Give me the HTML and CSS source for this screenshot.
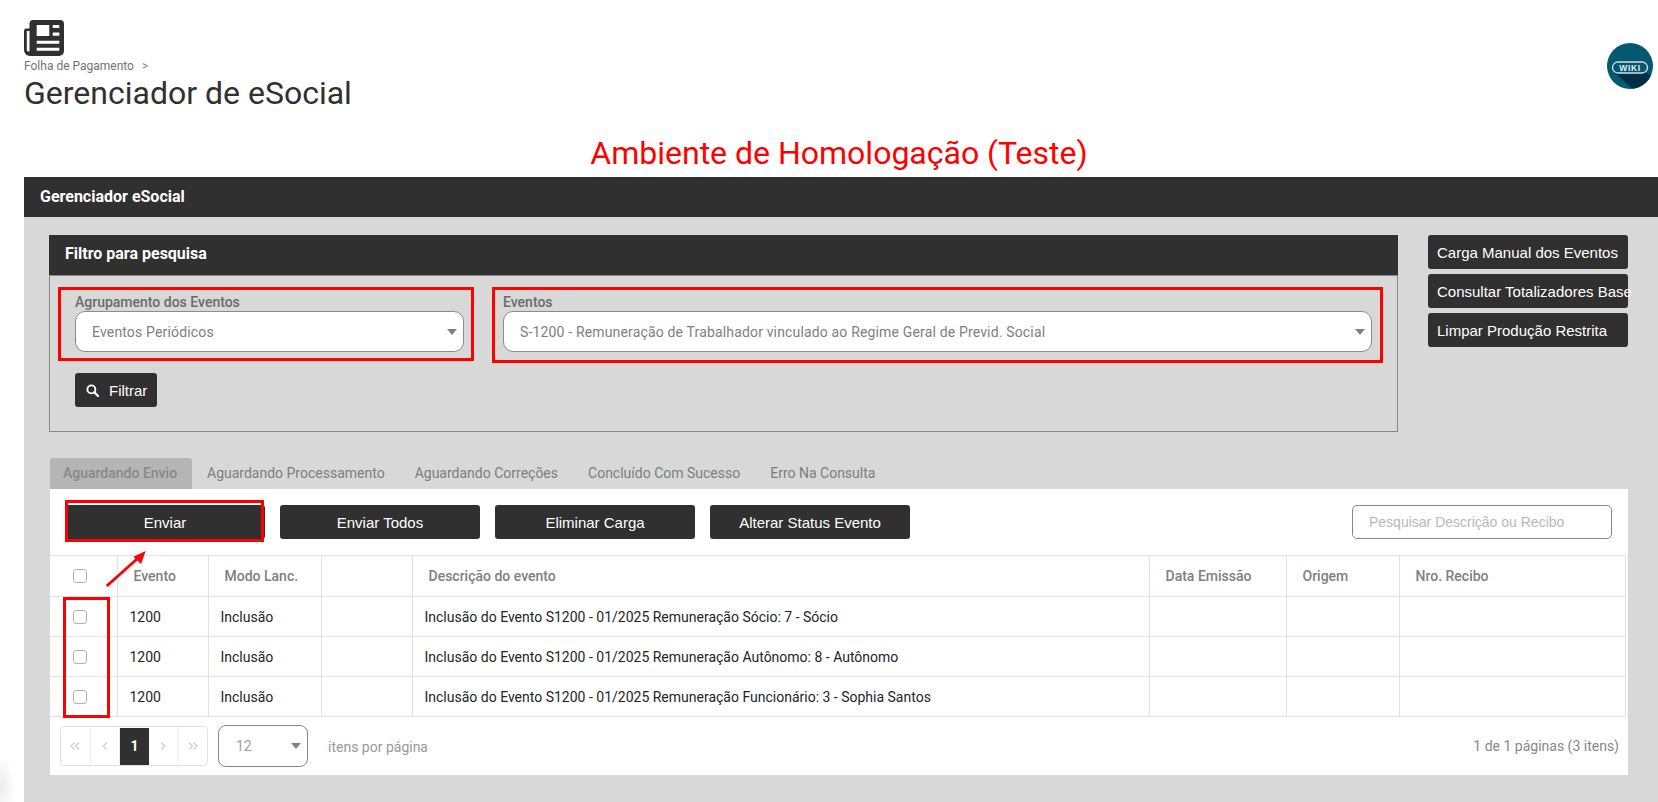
FILE: index.html
```html
<!DOCTYPE html>
<html lang="pt-BR">
<head>
<meta charset="utf-8">
<title>Gerenciador de eSocial</title>
<link rel="stylesheet" href="styles.css">
</head>
<body>
<header class="page-head">
  <div class="head-left">
    <svg class="news-icon" viewBox="0 0 40 36" aria-hidden="true">
      <path fill="#303030" fill-rule="evenodd" d="M9 0H36a4 4 0 0 1 4 4V31a5 5 0 0 1-5 5H6a6 6 0 0 1-6-6V11a2.500 2.500 0 0 1 2.500-2.500H5.500V3.500A3.500 3.500 0 0 1 9 0ZM2.800 11V30a1.700 1.700 0 0 0 2.700 1.200V11ZM12.700 5V16H25.300V5ZM28.700 5V8H35.300V5ZM28.700 12.500V15.700H35.300V12.500ZM12.700 20.700V23.700H35.300V20.700ZM12.700 27.700V30.700H35.300V27.700Z"/>
    </svg>
    <div class="crumb">Folha de Pagamento <span class="crumb-sep">&gt;</span></div>
    <h1 class="title">Gerenciador de eSocial</h1>
  </div>
  <svg class="wiki" viewBox="0 0 46 46" aria-hidden="true">
    <defs><clipPath id="wc"><circle cx="23" cy="23" r="23"/></clipPath></defs>
    <circle cx="23" cy="23" r="23" fill="#04586f"/>
    <path clip-path="url(#wc)" fill="#022f43" d="M8 30H40L46 34V46H26Z"/>
    <rect x="5.500" y="19" width="35" height="11" rx="5.500" fill="#04586f" stroke="#d5dfe3" stroke-width="1.300"/>
    <text x="23" y="27.800" text-anchor="middle" class="wiki-text">WIKI</text>
  </svg>
</header>
<div class="env">Ambiente de Homologação (Teste)</div>
<main class="main">
  <div class="main-bar">Gerenciador eSocial</div>
  <div class="main-body">
    <div class="top-row">
      <section class="filter">
        <div class="filter-head">Filtro para pesquisa</div>
        <div class="filter-body">
          <div class="fields">
            <div class="field field-a">
              <label class="lbl">Agrupamento dos Eventos</label>
              <div class="select">Eventos Periódicos<span class="caret"></span></div>
            </div>
            <div class="field field-b">
              <label class="lbl">Eventos</label>
              <div class="select">S-1200 - Remuneração de Trabalhador vinculado ao Regime Geral de Previd. Social<span class="caret"></span></div>
            </div>
          </div>
          <button class="btn btn-filter">
            <svg class="search" viewBox="0 0 14 14" aria-hidden="true"><circle cx="5.800" cy="5.800" r="4.300" fill="none" stroke="#fff" stroke-width="2"/><path d="M9 9l4 4" stroke="#fff" stroke-width="2.400" stroke-linecap="round"/></svg>
            Filtrar
          </button>
        </div>
      </section>
      <div class="side">
        <button class="btn side-btn">Carga Manual dos Eventos</button>
        <button class="btn side-btn">Consultar Totalizadores Base</button>
        <button class="btn side-btn">Limpar Produção Restrita</button>
      </div>
    </div>
    <nav class="tabs">
      <span class="tab tab-on">Aguardando Envio</span>
      <span class="tab">Aguardando Processamento</span>
      <span class="tab">Aguardando Correções</span>
      <span class="tab">Concluído Com Sucesso</span>
      <span class="tab">Erro Na Consulta</span>
    </nav>
    <section class="panel">
      <div class="toolbar">
        <button class="btn act">Enviar</button>
        <button class="btn act">Enviar Todos</button>
        <button class="btn act">Eliminar Carga</button>
        <button class="btn act">Alterar Status Evento</button>
        <div class="search-box">Pesquisar Descrição ou Recibo</div>
      </div>
      <table class="grid">
        <colgroup>
          <col class="c1"><col class="c2"><col class="c3"><col class="c4"><col class="c5"><col class="c6"><col class="c7"><col>
        </colgroup>
        <thead>
          <tr>
            <th class="chk"><span class="box"></span></th>
            <th>Evento</th><th>Modo Lanc.</th><th></th><th>Descrição do evento</th><th>Data Emissão</th><th>Origem</th><th>Nro. Recibo</th>
          </tr>
        </thead>
        <tbody>
          <tr>
            <td class="chk"><span class="box"></span></td>
            <td>1200</td><td>Inclusão</td><td></td><td>Inclusão do Evento S1200 - 01/2025 Remuneração Sócio: 7 - Sócio</td><td></td><td></td><td></td>
          </tr>
          <tr>
            <td class="chk"><span class="box"></span></td>
            <td>1200</td><td>Inclusão</td><td></td><td>Inclusão do Evento S1200 - 01/2025 Remuneração Autônomo: 8 - Autônomo</td><td></td><td></td><td></td>
          </tr>
          <tr>
            <td class="chk"><span class="box"></span></td>
            <td>1200</td><td>Inclusão</td><td></td><td>Inclusão do Evento S1200 - 01/2025 Remuneração Funcionário: 3 - Sophia Santos</td><td></td><td></td><td></td>
          </tr>
        </tbody>
      </table>
      <div class="pager">
        <div class="pages">
          <span class="pg"><svg class="chev" viewBox="0 0 10 8" aria-hidden="true"><path d="M4.500 .5L1 4l3.500 3.500M9 .5L5.500 4 9 7.500"/></svg></span>
          <span class="pg"><svg class="chev" viewBox="0 0 10 8" aria-hidden="true"><path d="M6.800 .5L3.300 4l3.500 3.500"/></svg></span>
          <span class="pg pg-on">1</span>
          <span class="pg"><svg class="chev" viewBox="0 0 10 8" aria-hidden="true"><path d="M3.300 .5L6.800 4 3.300 7.500"/></svg></span>
          <span class="pg"><svg class="chev" viewBox="0 0 10 8" aria-hidden="true"><path d="M1 .5L4.500 4 1 7.500M5.500 .5L9 4 5.500 7.500"/></svg></span>
        </div>
        <div class="size">12<span class="caret"></span></div>
        <span class="per">itens por página</span>
        <span class="count">1 de 1 páginas (3 itens)</span>
      </div>
    </section>
  </div>
</main>
<div class="mark mark-a"></div>
<div class="mark mark-b"></div>
<div class="mark mark-c"></div>
<div class="mark mark-d"></div>
<svg class="arrow" viewBox="0 0 42 36" aria-hidden="true"><path d="M1.700 35L32 8" stroke="#f00" stroke-width="2.800"/><path d="M40.700 0L36 13L28.300 5.700Z" fill="#f00"/></svg>
<div class="glow"></div>
</body>
</html>
```
FILE: styles.css
```css
* { box-sizing: border-box; }
html, body { margin: 0; height: 100%; }
body {
  position: relative;
  overflow: hidden;
  background: #fff;
  font-family: Roboto, "Liberation Sans", sans-serif;
  color: #212529;
  padding-left: 24px;
}
.page-head {
  height: 128px;
  padding-top: 20px;
  display: flex;
  justify-content: space-between;
}
.news-icon { display: block; width: 40px; height: 36px; }
.crumb { margin-top: 3px; height: 15px; font-size: 12px; line-height: 15px; color: #737373; }
.crumb-sep { margin-left: 5px; color: #888; }
.title { margin: 0; font-size: 32px; font-weight: 400; line-height: 38px; color: #303030; }
.wiki { width: 46px; height: 46px; margin-top: 23px; margin-right: 5px; flex: none; }
.wiki-text { font: 700 8.500px "Liberation Sans", sans-serif; fill: #e8eef0; letter-spacing: .6px; }
.env {
  height: 49px;
  padding: 6px 4px 0 0;
  text-align: center;
  font-size: 32px;
  line-height: 38px;
  color: #f00;
}
.main { height: 625px; background: #d8d8d8; }
.main-bar, .filter-head {
  height: 40px;
  padding-left: 16px;
  background: #303030;
  color: #fff;
  font-size: 16px;
  font-weight: 700;
  line-height: 38px;
}
.main-bar { line-height: 40px; }
.main-body { padding: 18px 30px 0 25px; }
.top-row { display: flex; gap: 30px; align-items: flex-start; }
.filter { width: 1349px; flex: none; }
.filter-body {
  height: 157px;
  border: 1px solid #888;
  padding: 18px 25px 0 25px;
}
.fields { display: flex; }
.field-a { width: 389px; margin-right: 39px; }
.field-b { width: 869px; }
.lbl {
  display: block;
  height: 17px;
  font-size: 14px;
  font-weight: 500;
  line-height: 17px;
  color: #6b6b6b;
}
.select {
  position: relative;
  height: 41px;
  padding-left: 16px;
  background: #fff;
  border: 1px solid #8c8c8c;
  border-radius: 10px;
  font-size: 14px;
  letter-spacing: .16px;
  line-height: 41px;
  color: #808080;
}
.caret {
  position: absolute;
  right: 6px;
  top: 50%;
  margin-top: -3px;
  border-left: 5.500px solid transparent;
  border-right: 5.500px solid transparent;
  border-top: 6px solid #808080;
}
.btn {
  background: #303030;
  color: #fff;
  border: 0;
  border-radius: 3px;
  font-family: "Liberation Sans", sans-serif;
  font-size: 15px;
}
.btn-filter {
  display: flex;
  align-items: center;
  gap: 10px;
  margin-top: 21px;
  width: 82px;
  height: 34px;
  padding: 0 0 0 11px;
}
.search { width: 13px; height: 13px; }
.side { width: 200px; flex: none; display: flex; flex-direction: column; gap: 5px; }
.side-btn {
  height: 34px;
  padding: 0 0 0 9px;
  text-align: left;
  white-space: nowrap;
  overflow: visible;
}
.tabs {
  display: flex;
  margin: 26px 0 0 1px;
  height: 31px;
  font-size: 14px;
  line-height: 31px;
  color: #7d7d7d;
}
.tab { padding: 0 15px; }
.tab-on {
  padding: 0 13px;
  width: 142px;
  background: #b5b5b5;
  border-radius: 3px 3px 0 0;
  color: #888;
  font-weight: 500;
  white-space: nowrap;
}
.panel { height: 286px; width: 1578px; margin-left: 1px; background: #fff; }
.toolbar {
  display: flex;
  align-items: center;
  gap: 15px;
  height: 66px;
  padding: 0 16px 0 15px;
}
.act { width: 200px; height: 34px; }
.search-box {
  margin-left: auto;
  width: 260px;
  height: 34px;
  padding-left: 16px;
  border: 1px solid #888;
  border-radius: 5px;
  font-family: "Liberation Sans", sans-serif;
  font-size: 14px;
  line-height: 32px;
  color: #b8b8b8;
}
.grid {
  width: 1576px;
  border-collapse: collapse;
  table-layout: fixed;
  font-size: 14px;
}
.c1 { width: 67px; }
.c2 { width: 91px; }
.c3 { width: 113px; }
.c4 { width: 91px; }
.c5 { width: 737px; }
.c6 { width: 137px; }
.c7 { width: 113px; }
.grid th, .grid td { border: 1px solid #e0e2e8; padding: 0 12px; height: 41px; text-align: left; }
.grid tr > :first-child { border-left: 0; }
.grid th { height: 41px; padding-left: 16px; font-weight: 500; color: #808080; }
.grid td { height: 40px; color: #212529; }
.grid .chk { padding: 0 0 0 23px; }
.box { display: block; width: 14px; height: 14px; border: 1px solid #adb5bd; border-radius: 3px; background: #fff; }
.pager { display: flex; align-items: center; height: 58px; padding: 0 9px 0 10px; font-size: 14px; color: #8a8a8a; }
.pages { display: flex; width: 148px; height: 40px; border: 1px solid #dee2e6; border-radius: 4px; margin-top: -1px; }
.pg { flex: 1; display: flex; align-items: center; justify-content: center; border-right: 1px solid #eee; }
.pg:last-child { border-right: 0; }
.pg-on { margin-top: 1px; background: #303030; color: #fff; font-size: 14px; font-weight: 700; border: 0; }
.chev { width: 10px; height: 8px; fill: none; stroke: #d0d0d0; stroke-width: 1.500; }
.size {
  position: relative;
  margin-left: 10px;
  width: 90px;
  height: 42px;
  margin-top: -1px;
  border: 1px solid #888;
  border-radius: 8px;
  padding-left: 17px;
  line-height: 40px;
  color: #a0a0a0;
}
.per { margin-left: 20px; margin-top: 2px; color: #999; }
.count { margin-left: auto; color: #888; }
.mark { position: absolute; border: 3px solid #f00; }
.mark-a { left: 58px; top: 287px; width: 416px; height: 74px; }
.mark-b { left: 492px; top: 287px; width: 891px; height: 76px; }
.mark-c { left: 65px; top: 500px; width: 199px; height: 42px; }
.mark-d { left: 63px; top: 597px; width: 47px; height: 121px; }
.arrow { position: absolute; left: 105px; top: 551px; width: 42px; height: 36px; }
.glow {
  position: absolute;
  left: 0;
  top: 755px;
  width: 16px;
  height: 47px;
  background: radial-gradient(ellipse at 0 70%, #ececec, #fff 70%);
}
```
